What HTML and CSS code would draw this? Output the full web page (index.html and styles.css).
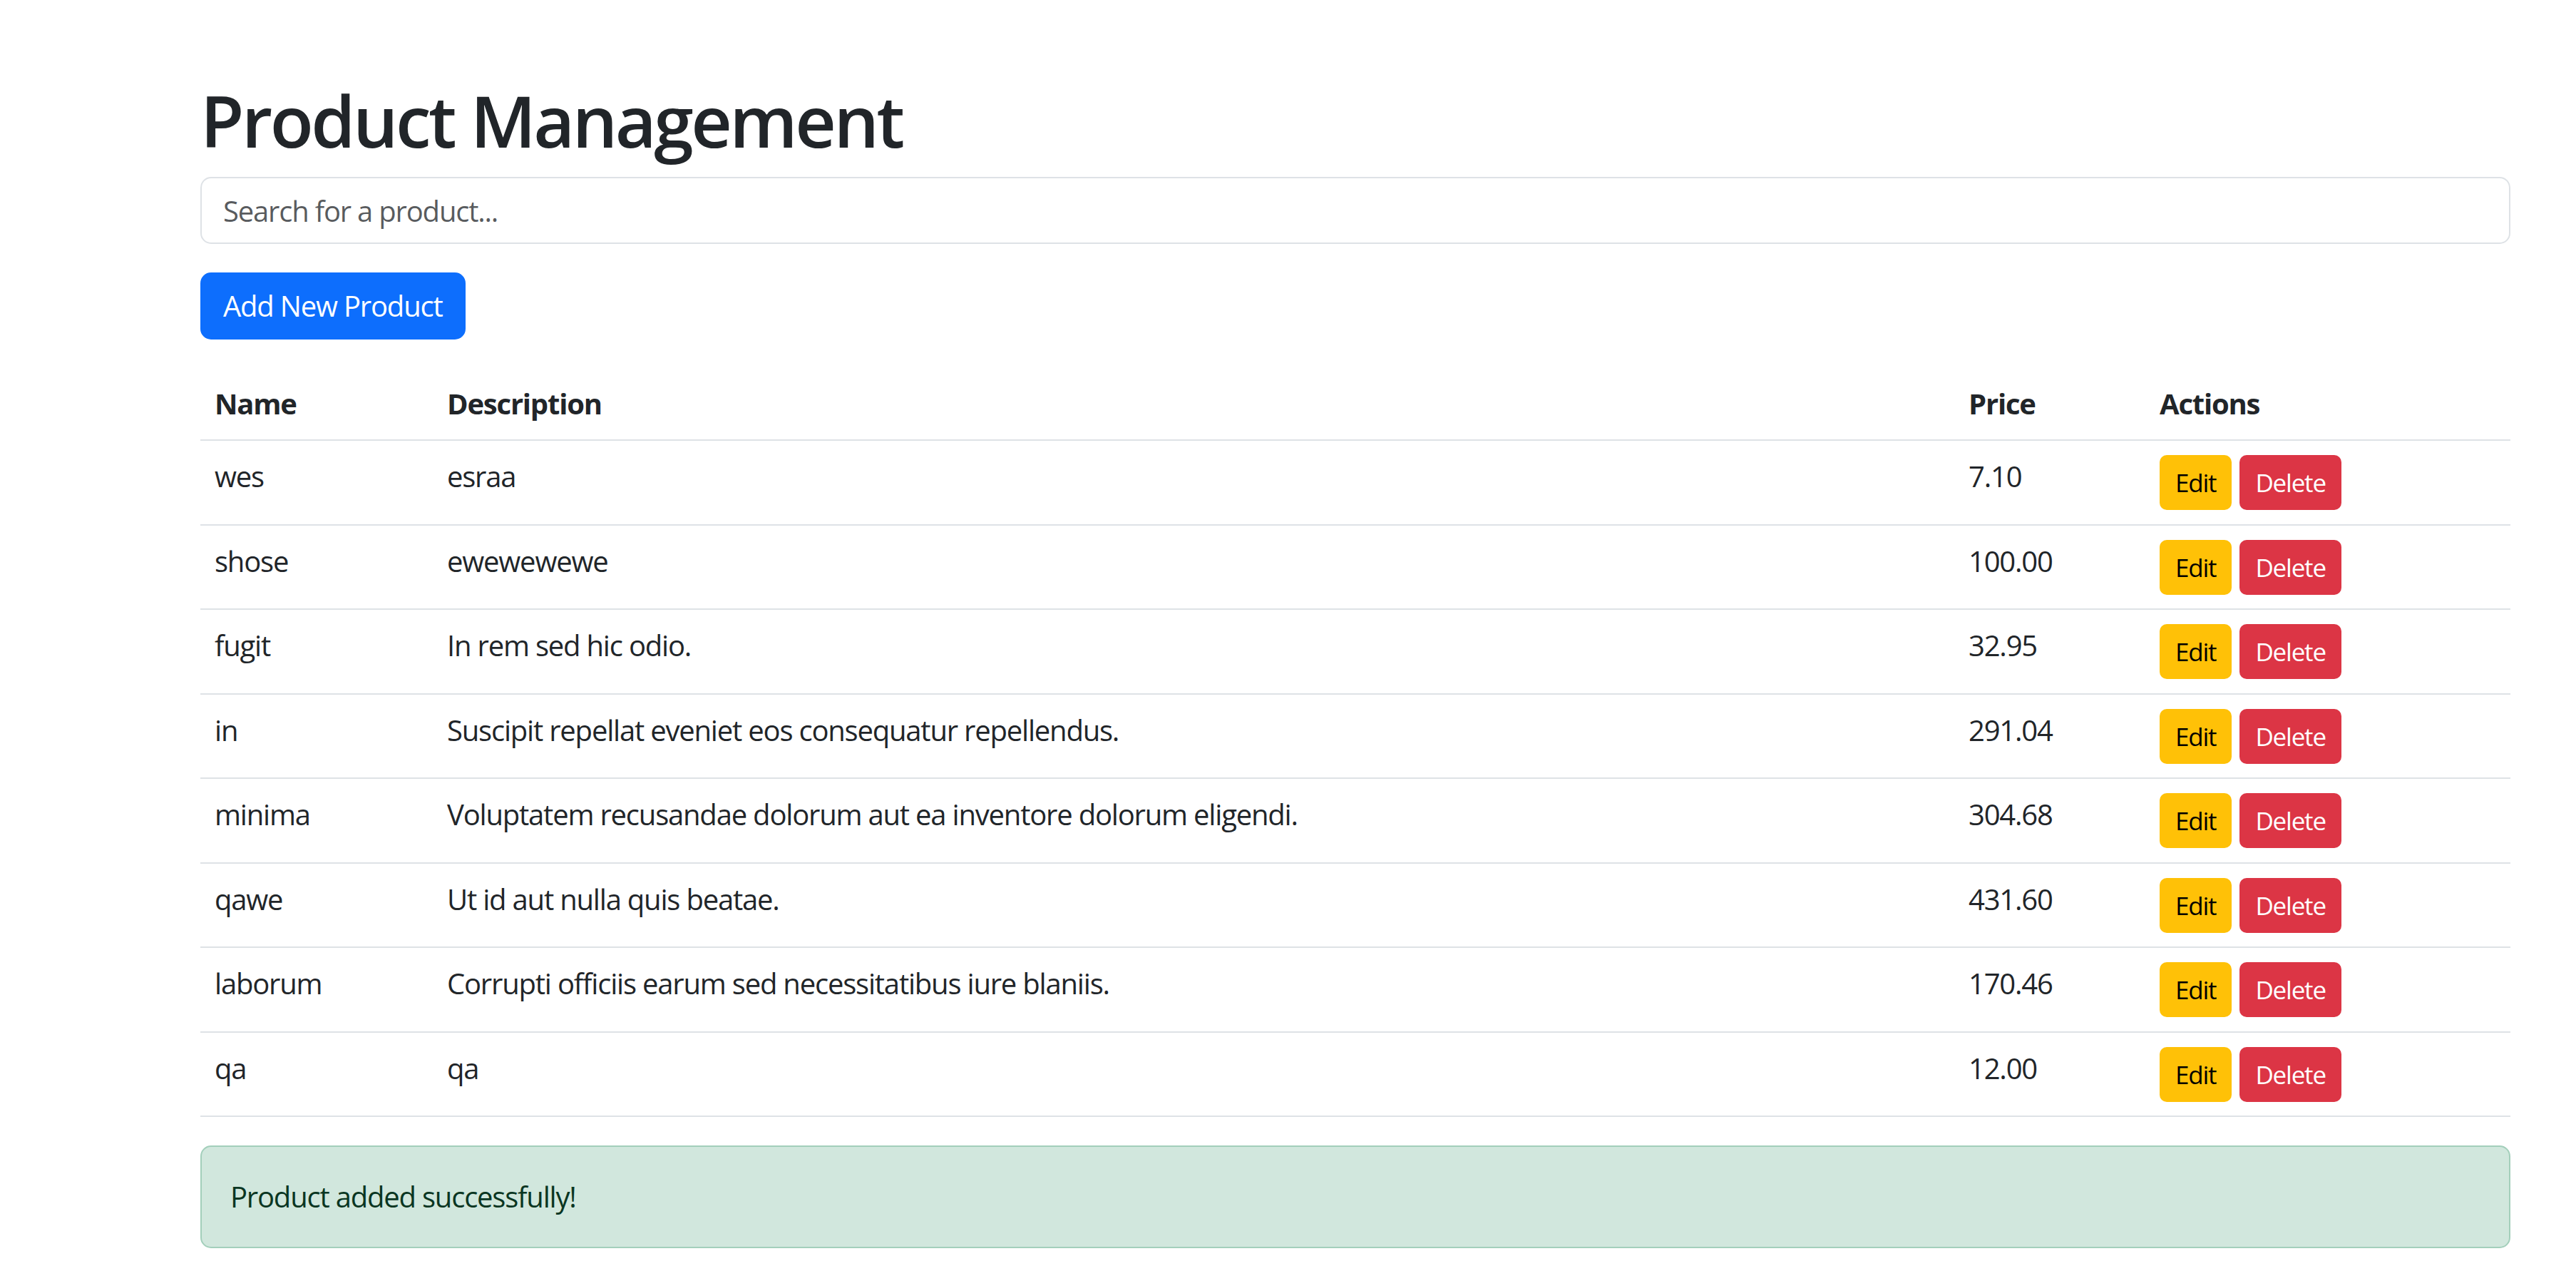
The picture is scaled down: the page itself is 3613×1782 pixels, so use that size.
FILE: index.html
```html
<!DOCTYPE html>
<html lang="en">
<head>
<meta charset="utf-8">
<title>Product Management</title>
<link rel="stylesheet" href="styles.css">
</head>
<body>
<div class="container">
  <h1 class="title">Product Management</h1>
  <input class="search" type="text" placeholder="Search for a product...">
  <div class="toolbar">
    <button class="btn btn-add" type="button">Add New Product</button>
  </div>
  <table class="table">
    <thead>
      <tr>
        <th class="col-name">Name</th>
        <th class="col-desc">Description</th>
        <th class="col-price">Price</th>
        <th class="col-actions">Actions</th>
      </tr>
    </thead>
    <tbody>
      <tr><td>wes</td><td>esraa</td><td>7.10</td><td><div class="actions"><button class="btn btn-sm btn-edit" type="button">Edit</button><button class="btn btn-sm btn-delete" type="button">Delete</button></div></td></tr>
      <tr><td>shose</td><td>ewewewewe</td><td>100.00</td><td><div class="actions"><button class="btn btn-sm btn-edit" type="button">Edit</button><button class="btn btn-sm btn-delete" type="button">Delete</button></div></td></tr>
      <tr><td>fugit</td><td>In rem sed hic odio.</td><td>32.95</td><td><div class="actions"><button class="btn btn-sm btn-edit" type="button">Edit</button><button class="btn btn-sm btn-delete" type="button">Delete</button></div></td></tr>
      <tr><td>in</td><td>Suscipit repellat eveniet eos consequatur repellendus.</td><td>291.04</td><td><div class="actions"><button class="btn btn-sm btn-edit" type="button">Edit</button><button class="btn btn-sm btn-delete" type="button">Delete</button></div></td></tr>
      <tr><td>minima</td><td>Voluptatem recusandae dolorum aut ea inventore dolorum eligendi.</td><td>304.68</td><td><div class="actions"><button class="btn btn-sm btn-edit" type="button">Edit</button><button class="btn btn-sm btn-delete" type="button">Delete</button></div></td></tr>
      <tr><td>qawe</td><td>Ut id aut nulla quis beatae.</td><td>431.60</td><td><div class="actions"><button class="btn btn-sm btn-edit" type="button">Edit</button><button class="btn btn-sm btn-delete" type="button">Delete</button></div></td></tr>
      <tr><td>laborum</td><td>Corrupti officiis earum sed necessitatibus iure blaniis.</td><td>170.46</td><td><div class="actions"><button class="btn btn-sm btn-edit" type="button">Edit</button><button class="btn btn-sm btn-delete" type="button">Delete</button></div></td></tr>
      <tr><td>qa</td><td>qa</td><td>12.00</td><td><div class="actions"><button class="btn btn-sm btn-edit" type="button">Edit</button><button class="btn btn-sm btn-delete" type="button">Delete</button></div></td></tr>
    </tbody>
  </table>
  <div class="alert">Product added successfully!</div>
</div>
</body>
</html>
```

FILE: styles.css
```css
* {
  box-sizing: border-box;
}

html,
body {
  margin: 0;
  padding: 0;
  background: #ffffff;
}

body {
  font-family: "Open Sans", "Liberation Sans", sans-serif;
  font-size: 40px;
  line-height: 1.5;
  letter-spacing: -0.03em;
  color: #212529;
}

.container {
  margin-left: 281px;
  width: 3240px;
  padding-top: 108px;
}

.title {
  margin: 0 0 20px;
  font-size: 100px;
  font-weight: 600;
  line-height: 1.2;
  letter-spacing: -0.035em;
}

.search {
  display: block;
  width: 100%;
  height: 94px;
  padding: 15px 30px;
  margin: 0 0 40px;
  font: inherit;
  letter-spacing: inherit;
  color: #212529;
  background: #ffffff;
  border: 2px solid #dee2e6;
  border-radius: 15px;
  outline: none;
}

.search::placeholder {
  color: rgba(33, 37, 41, 0.75);
}

.toolbar {
  display: flex;
  margin-bottom: 40px;
}

.btn {
  display: inline-block;
  font-family: inherit;
  font-weight: 400;
  letter-spacing: inherit;
  border: 2px solid transparent;
  cursor: pointer;
  text-align: center;
}

.btn-add {
  font-size: 40px;
  line-height: 60px;
  padding: 15px 30px;
  border-radius: 15px;
  background: #0d6efd;
  color: #ffffff;
}

.table {
  width: 100%;
  border-collapse: collapse;
  table-layout: fixed;
  margin-bottom: 40px;
}

.table th,
.table td {
  padding: 20px 20px 19.5px;
  border-bottom: 2px solid #dee2e6;
  text-align: left;
  vertical-align: top;
}

.table th {
  font-weight: 700;
  padding-bottom: 20px;
}

.col-name {
  width: 326px;
}

.col-desc {
  width: 2134px;
}

.col-price {
  width: 268px;
}

.col-actions {
  width: 512px;
}

.actions {
  display: flex;
  gap: 11px;
}

.btn-sm {
  font-size: 35px;
  line-height: 53px;
  padding: 10px 20px;
  border-radius: 10px;
}

.btn-edit {
  background: #ffc107;
  color: #000000;
}

.btn-delete {
  background: #dc3545;
  color: #ffffff;
}

.alert {
  padding: 40px;
  border: 2px solid #a3cfbb;
  border-radius: 15px;
  background: #d1e7dd;
  color: #0a3622;
}
```
